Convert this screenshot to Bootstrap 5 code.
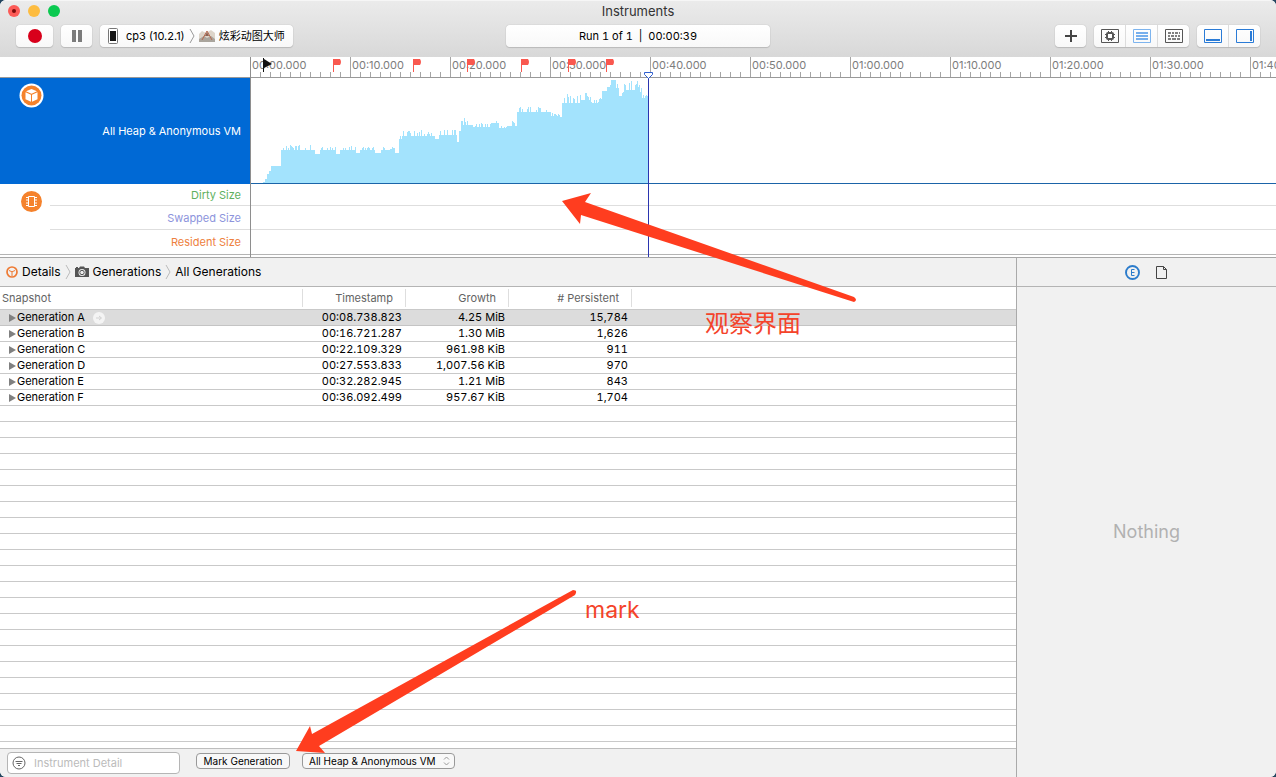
<!DOCTYPE html>
<html lang="en">
<head>
<meta charset="utf-8">
<meta name="viewport" content="width=device-width, initial-scale=1">
<title>Instruments</title>
<link href="https://cdn.jsdelivr.net/npm/bootstrap@5.3.0/dist/css/bootstrap.min.css" rel="stylesheet">
<style>
  body { font: 11px/16px Inter, "Noto Sans CJK SC", sans-serif; font-variant-numeric: tabular-nums; color: #000; background: #23455f; }
  svg { display: block; flex: none; }
  .app-window { background: #fff; border-radius: 6px; }
  .min-0 { min-width: 0; min-height: 0; }

  .title-area { background: linear-gradient(#ebebeb, #d8d8d8); padding: 2px 16px 10px; border-top: 1px solid #f6f6f6; }
  .three-col { display: grid; grid-template-columns: 1fr minmax(0, 264px) 1fr; align-items: center; }
  .three-col + .three-col { margin-top: 6px; }
  .title-text { font-size: 13px; line-height: 16px; color: #333; }
  .dot { width: 12px; height: 12px; border-radius: 50%; border: 0; padding: 0; display: flex; align-items: center; justify-content: center; }
  .dot-row { margin-left: -8px; gap: 8px; }
  .tool { height: 22px; border: 0; border-radius: 4px; background: linear-gradient(#fff, #f8f8f8); box-shadow: 0 0 1px #9a9a9a, 0 1px 1px #bdbdbd; padding: 0; display: flex; align-items: center; justify-content: center; color: #000; font-variant-numeric: inherit; }
  .tool-group { border-radius: 4px; box-shadow: 0 0 1px #9a9a9a, 0 1px 1px #bdbdbd; overflow: hidden; gap: 1px; background: #dcdcdc; }
  .tool-group .tool { border-radius: 0; box-shadow: none; width: 31px; }
  .w-rec { width: 37px; } .w-sq { width: 31px; }

  .track-grid { display: grid; grid-template-columns: 250px minmax(0, 1fr); border-bottom: 1px solid #a6a6a6; }
  .track-grid > div { padding-bottom: 2px; }
  .track-right { border-left: 1px solid #8e8e8e; }
  .ruler-gap { height: 21px; border-bottom: 1px solid #999; }
  .ruler { height: 21px; border-bottom: 1px solid #999; background: repeating-linear-gradient(90deg, transparent 0 9px, #a5a5a5 9px 10px) 0 15px / 100% 5px no-repeat #fff; }
  .ruler-cell { width: 100px; flex: none; padding-left: 1px; border-right: 1px solid #a5a5a5; color: #7c7c7c; line-height: 17px; height: 20px; font-variant-numeric: normal; }
  .heap-label { height: 106px; background: #0069d5; color: #fff; padding: 0 9px; position: relative; }
  .heap-icon { position: absolute; left: 19px; top: 5px; }
  .graph { height: 106px; border-bottom: 1px solid #1b64a8; }
  .lanes { border-bottom: 1px solid #b4b4b4; }
  .lane { height: 24px; border-bottom: 1px solid #dedede; }
  .lane:first-child { height: 22px; }
  .lane:last-child { border-bottom: 0; }
  .lane-name { padding-right: 9px; display: flex; align-items: center; justify-content: flex-end; }
  .vm-cell { width: 50px; padding: 7px 0 0 21px; }
  .flag { position: absolute; top: 1px; }
  .playhead { position: absolute; top: 15px; bottom: 0; width: 9px; margin-left: -5px; background: linear-gradient(#2b35b0, #2b35b0) 4px 4px / 1px 100% no-repeat; }

  .bar { background: #f1f1f1; border-bottom: 1px solid #b4b4b4; height: 29px; }
  .crumbs { font-size: 12px; padding-left: 6px; gap: 4px; }
  .crumbs a { color: #000; text-decoration: none; }
  .inspector { width: 260px; flex: none; border-left: 1px solid #aaa; background: #f1f1f1; }
  .nothing { font-size: 18px; line-height: 24px; color: #b1b1b1; }
  .icon-btn { border: 0; background: none; padding: 0; }

  .rows-area { background: repeating-linear-gradient(#fff 0 15px, #c9c9c9 15px 16px) 0 23px; overflow: hidden; }
  .gen-table { width: 100%; table-layout: fixed; border-collapse: separate; border-spacing: 0; }
  .gen-table th { height: 23px; padding: 0 13px 0 2px; background: #fff linear-gradient(#dedede, #dedede) right 0 top 2px / 1px 18px no-repeat; border-bottom: 1px solid #c9c9c9; font-weight: 400; color: #636363; }
  .gen-table th:last-child { background: #fff; }
  .gen-table td { height: 16px; line-height: 15px; padding: 0 4px 0 9px; border-bottom: 1px solid #c9c9c9; white-space: nowrap; }
  .gen-table tr.picked td { background: #dcdcdc; border-color: #c4c4c4; }
  .foot { background: #f1f1f1; border-top: 1px solid #bdbdbd; height: 29px; padding: 3px 7px; }
  .filter-box { width: 173px; height: 22px; background: #fff; border: 1px solid #b5b5b5; border-radius: 4px; padding-left: 4px; margin-right: 16px; }
  .filter-box input { border: 0; outline: 0; background: none; font-size: 11px; line-height: 16px; padding: 0; width: 130px; }
  .filter-box input::placeholder { color: #bbb; opacity: 1; }
  .mini { display: block; width: 94px; height: 16px; margin-top: 1px; border: 1px solid #999; border-radius: 4px; background: #f8f8f8; font-size: 10px; line-height: 14px; padding: 0 6px; color: #000; appearance: none; white-space: nowrap; }
  .pick-wrap { position: relative; margin-left: 12px; }
  .pick-wrap .mini { width: 153px; }
  .pick-wrap svg { position: absolute; right: 5px; top: 4px; pointer-events: none; }

  .note { position: absolute; pointer-events: none; }
  .note-text { color: #f4432a; font-size: 24px; line-height: 32px; }
  .note-latin { font-size: 23px; }
</style>
</head>
<body>
<div class="app-window d-flex flex-column vh-100 overflow-hidden position-relative">

  <header class="title-area">
    <div class="three-col">
      <div class="dot-row d-flex">
        <button class="dot" style="background:#fc5b57" aria-label="Close"><svg width="4" height="4"><circle cx="2" cy="2" r="2" fill="#7a0b0b"/></svg></button>
        <button class="dot" style="background:#fdbc40" aria-label="Minimize"></button>
        <button class="dot" style="background:#0bc950" aria-label="Zoom"></button>
      </div>
      <div class="title-text text-center">Instruments</div>
      <div></div>
    </div>
    <div class="three-col">
      <div class="d-flex gap-2">
        <button class="tool w-rec" aria-label="Record"><svg width="14" height="14"><circle cx="7" cy="7" r="7" fill="#d8001b"/></svg></button>
        <button class="tool w-sq" aria-label="Pause"><svg width="10" height="12"><path d="M0 0h4v12H0zM6 0h4v12H6z" fill="#7b7b7b"/></svg></button>
        <button class="tool px-2">
          <svg width="10" height="16"><rect x=".5" y=".5" width="9" height="15" rx="1" fill="#fff" stroke="#777"/><rect x="2" y="3" width="6" height="10" fill="#151515"/></svg>
          <span class="ms-1 ps-1" style="font-variant-numeric:normal">cp3 (10.2.1)</span>
          <svg class="ms-1" width="6" height="14"><path d="M1 0l4 7-4 7" fill="none" stroke="#999"/></svg>
          <svg class="mx-1" width="16" height="16"><path d="M0 6l3-3 4 2 5-3 4 3v9H0z" fill="#ddd5ca"/><path d="M0 11l5-3 3 2 4-2 4 3v3H0z" fill="#aaa59d"/><path d="M3 12L8 3l5 9" fill="none" stroke="#b8694e"/><path d="M6 8h4L8 4z" fill="#8d6253"/></svg>
          <span>炫彩动图大师</span>
        </button>
      </div>
      <div class="tool"><span>Run 1 of 1 &nbsp;|&nbsp; 00:00:39</span></div>
      <div class="d-flex gap-2 justify-content-end">
        <button class="tool w-sq" aria-label="Add"><svg width="12" height="12"><path d="M6 0v12M0 6h12" stroke="#444" stroke-width="2"/></svg></button>
        <div class="tool-group d-flex">
          <button class="tool" aria-label="CPU strategy"><svg width="18" height="14" fill="none" stroke="#555"><path d="M.5.5h17v13H.5z"/><rect x="6" y="4" width="6" height="6" rx="1" stroke-width="2"/><path d="M7.500 2v1M10.500 2v1M7.500 11v1M10.500 11v1M4 5.500h1M4 8.500h1M13 5.500h1M13 8.500h1"/></svg></button>
          <button class="tool" aria-label="Instruments strategy"><svg width="18" height="14" fill="none" stroke="#7db4ee"><path d="M.5.5h17v13H.5z"/><path d="M3 4h12M3 7h12M3 10h12" stroke="#4a95e8" stroke-width="1.500"/></svg></button>
          <button class="tool" aria-label="Threads strategy"><svg width="18" height="14" fill="none" stroke="#555"><path d="M.5.5h17v13H.5z"/><path d="M3 4h12" stroke-width="1.500" stroke-dasharray="3 1 2 1"/><path d="M3 7h12" stroke-width="1.500" stroke-dasharray="2 1 3 1"/><path d="M3 10h12" stroke-width="1.500" stroke-dasharray="3 1 4 1"/></svg></button>
        </div>
        <div class="tool-group d-flex">
          <button class="tool" aria-label="Detail pane"><svg width="18" height="14" fill="none" stroke="#2a7bd6"><path d="M.5.5h17v13H.5z"/><path d="M2 11h14" stroke-width="2"/></svg></button>
          <button class="tool" aria-label="Inspector pane"><svg width="18" height="14" fill="none" stroke="#2a7bd6"><path d="M.5.5h17v13H.5z"/><path d="M15 2v10" stroke-width="2"/></svg></button>
        </div>
      </div>
    </div>
  </header>

  <section class="track-grid" aria-label="Timeline">
    <div class="track-left">
      <div class="ruler-gap"></div>
      <div class="heap-label d-flex align-items-center justify-content-end">
        <svg class="heap-icon" width="25" height="25" viewBox="0 0 25 25"><circle cx="12.500" cy="12.500" r="12" fill="#fff"/><circle cx="12.500" cy="12.500" r="10" fill="#f5822c"/><path d="M12.500 6l5.500 2.300-5.500 2.400L7 8.300zM6.500 9.200l5.500 2.500v7l-5.500-2.500zM18.500 9.200L13 11.700v7l5.500-2.500z" fill="#fff"/></svg>
        All Heap &amp; Anonymous VM
      </div>
      <div class="lanes d-flex">
        <div class="vm-cell"><svg width="21" height="21" viewBox="0 0 21 21"><circle cx="10.500" cy="10.500" r="10.500" fill="#f5822c"/><g fill="none" stroke="#fff"><path d="M7.500 5.500h6v10h-6z"/><path d="M5 6.500h2M5 9h2M5 12h2M5 14.500h2M14 6.500h2M14 9h2M14 12h2M14 14.500h2"/></g></svg></div>
        <div class="flex-grow-1">
          <div class="lane lane-name" style="color:#5eb05e">Dirty Size</div>
          <div class="lane lane-name" style="color:#8d94dc">Swapped Size</div>
          <div class="lane lane-name" style="color:#ee8140">Resident Size</div>
        </div>
      </div>
    </div>
    <div class="track-right position-relative">
      <div class="ruler d-flex overflow-hidden">
        <div class="ruler-cell">00:00.000</div><div class="ruler-cell">00:10.000</div><div class="ruler-cell">00:20.000</div><div class="ruler-cell">00:30.000</div><div class="ruler-cell">00:40.000</div><div class="ruler-cell">00:50.000</div><div class="ruler-cell">01:00.000</div><div class="ruler-cell">01:10.000</div><div class="ruler-cell">01:20.000</div><div class="ruler-cell">01:30.000</div><div class="ruler-cell">01:40.000</div>
      </div>
      <div class="graph"><svg id="heapGraph" width="398" height="105" shape-rendering="crispEdges"><path fill="#a3e3fd"/></svg></div>
      <div class="lanes"><div class="lane"></div><div class="lane"></div><div class="lane"></div></div>
      <svg class="flag" style="left:12px" width="9" height="14"><path d="M.5 0v14" stroke="#111"/><path d="M1 1l8 5-8 4z" fill="#111"/></svg>
      <svg class="flag" style="left:82px" width="9" height="14"><path d="M.5 1v13" stroke="#f9584f"/><path d="M1 1h6q2 3 0 6H1z" fill="#f9584f"/></svg>
      <svg class="flag" style="left:162px" width="9" height="14"><path d="M.5 1v13" stroke="#f9584f"/><path d="M1 1h6q2 3 0 6H1z" fill="#f9584f"/></svg>
      <svg class="flag" style="left:216px" width="9" height="14"><path d="M.5 1v13" stroke="#f9584f"/><path d="M1 1h6q2 3 0 6H1z" fill="#f9584f"/></svg>
      <svg class="flag" style="left:270px" width="9" height="14"><path d="M.5 1v13" stroke="#f9584f"/><path d="M1 1h6q2 3 0 6H1z" fill="#f9584f"/></svg>
      <svg class="flag" style="left:317px" width="9" height="14"><path d="M.5 1v13" stroke="#f9584f"/><path d="M1 1h6q2 3 0 6H1z" fill="#f9584f"/></svg>
      <svg class="flag" style="left:355px" width="9" height="14"><path d="M.5 1v13" stroke="#f9584f"/><path d="M1 1h6q2 3 0 6H1z" fill="#f9584f"/></svg>
      <div class="playhead" style="left:398px"><svg width="9" height="7"><path d="M.5.5h8v2l-4 4-4-4z" fill="#fff" stroke="#2f5fd0"/></svg></div>
    </div>
  </section>

  <main class="d-flex flex-grow-1 min-0">
    <section class="d-flex flex-column flex-grow-1 min-0">
      <nav class="bar crumbs d-flex align-items-center" aria-label="Path">
        <svg width="12" height="12" fill="none" stroke="#ee7a33"><circle cx="6" cy="6" r="5" stroke-width="1.700"/><path d="M3 4.500l3 1.300 3-1.300M6 6v4"/></svg>
        <a href="#">Details</a>
        <svg width="6" height="14"><path d="M1 0l4 7-4 7" fill="none" stroke="#bbb"/></svg>
        <svg width="14" height="12"><path d="M0 2h1V1h2v1h1l1-1.500h4L10 2h4v9H0z" fill="#555"/><circle cx="7" cy="6.500" r="3.500" fill="#eee"/><circle cx="7" cy="6.500" r="2.200" fill="none" stroke="#555"/></svg>
        <a href="#">Generations</a>
        <svg width="6" height="14"><path d="M1 0l4 7-4 7" fill="none" stroke="#bbb"/></svg>
        <a href="#">All Generations</a>
      </nav>
      <div class="rows-area flex-grow-1 min-0">
        <table class="gen-table">
          <colgroup><col style="width:303px"><col style="width:103px"><col style="width:103px"><col style="width:123px"><col></colgroup>
          <thead><tr><th>Snapshot</th><th class="text-end">Timestamp</th><th class="text-end">Growth</th><th class="text-end"># Persistent</th><th></th></tr></thead>
          <tbody id="gens"></tbody>
        </table>
      </div>
      <footer class="foot d-flex align-items-start">
        <div class="filter-box d-flex align-items-center">
          <svg width="14" height="14" fill="none" stroke="#666"><circle cx="7" cy="7" r="6"/><path d="M3.500 5.500h7M4.500 7.500h5M6 9.500h2"/></svg>
          <input class="ms-2" type="text" placeholder="Instrument Detail" aria-label="Instrument Detail">
        </div>
        <button class="mini">Mark Generation</button>
        <div class="pick-wrap">
          <select class="mini" aria-label="Heap scope"><option>All Heap &amp; Anonymous VM</option></select>
          <svg width="7" height="10" fill="none" stroke="#999"><path d="M1 3.500l2.500-2.500L6 3.500M1 6.500l2.500 2.500L6 6.500"/></svg>
        </div>
      </footer>
    </section>

    <aside class="inspector d-flex flex-column">
      <div class="bar d-flex align-items-center justify-content-center gap-3">
        <button class="icon-btn" aria-label="Extended detail"><svg width="15" height="15" fill="none" stroke="#2c7ccb"><circle cx="7.500" cy="7.500" r="6.500" stroke-width="1.900"/><path d="M9.500 4.500h-3v6h3M6.500 7.500h3"/></svg></button>
        <button class="icon-btn" aria-label="Run info"><svg width="12" height="13" fill="none" stroke="#444"><path d="M.5.5h7l3 3v9H.5zM7.500.5v3h3"/></svg></button>
      </div>
      <div class="flex-grow-1 d-flex align-items-center justify-content-center"><span class="nothing">Nothing</span></div>
    </aside>
  </main>

  <!-- annotations drawn over the window -->
  <svg class="note" style="left:560px;top:190px" width="300" height="116"><path d="M2 11L31 3l-6 9L294 107q4 3 0 5L21 25l-1 9z" fill="#ff3d1f"/></svg>
  <svg class="note" style="left:294px;top:586px" width="286" height="168"><path d="M2 165L16 140l2 8L279 4q5 0 2 5L25 160l6 7z" fill="#ff3d1f"/></svg>
  <div class="note note-text" style="left:705px;top:308px">观察界面</div>
  <div class="note note-text note-latin" style="left:585px;top:594px">mark</div>
</div>

<script src="https://cdn.jsdelivr.net/npm/bootstrap@5.3.0/dist/js/bootstrap.bundle.min.js"></script>
<script>
  const gens = [
    ['A', '00:08.738.823', '4.25 MiB', '15,784'], ['B', '00:16.721.287', '1.30 MiB', '1,626'],
    ['C', '00:22.109.329', '961.98 KiB', '911'], ['D', '00:27.553.833', '1,007.56 KiB', '970'],
    ['E', '00:32.282.945', '1.21 MiB', '843'], ['F', '00:36.092.499', '957.67 KiB', '1,704']];
  const tri = '<svg width="8" height="8"><path d="M0 0l7 4-7 4z" fill="#808080"/></svg>';
  const go = '<svg class="ms-2" width="12" height="12"><circle cx="6" cy="6" r="6" fill="#f4f4f4"/><path d="M3 6h5M6 4l2.500 2L6 8" fill="none" stroke="#d2d2d2"/></svg>';
  document.getElementById('gens').innerHTML = gens.map((g, i) =>
    `<tr class="${i ? '' : 'picked'}"><td><div class="d-flex align-items-center">${tri}<span>Generation ${g[0]}</span>${i ? '' : go}</div></td>` +
    g.slice(1).map(v => `<td class="text-end">${v}</td>`).join('') + '<td></td></tr>').join('');

  // heap size over time: [seconds x10, height, spike height]
  const levels = [[12,1,0],[14,4,0],[16,9,0],[18,12,0],[20,17,0],[30,33,5],[64,29,0],[69,33,4],[85,29,0],[89,33,4],[105,30,0],[109,33,4],
    [124,30,0],[130,33,4],[144,30,0],[148,44,3],[152,47,7],[184,44,0],[188,48,6],[206,41,0],[208,52,3],[210,58,7],[222,56,4],[240,60,4],[248,55,2],
    [256,57,6],[266,71,9],[275,71,6],[300,67,3],[308,66,4],[311,80,9],[330,83,8],[340,80,4],[348,84,3],[351,92,4],[356,96,6],[360,103,3],
    [365,95,6],[368,87,4],[373,93,10],[387,91,8],[391,85,5],[396,87,5],[398,0,0]];
  let d = 'M12 105', seed = 7;
  for (let i = 0; i < levels.length - 1; i++) {
    const [x0, h, spike] = levels[i];
    for (let x = x0; x < levels[i + 1][0]; x++) {
      seed = (seed * 1103 + 12345) % 65521;
      const r = seed / 65521;
      const top = 105 - h - (r > .6 ? Math.round(spike * (r - .4) * 1.600) : 0);
      d += `V${Math.max(0, top)}h1`;
    }
  }
  document.querySelector('#heapGraph path').setAttribute('d', d + 'V105z');
</script>
</body>
</html>
